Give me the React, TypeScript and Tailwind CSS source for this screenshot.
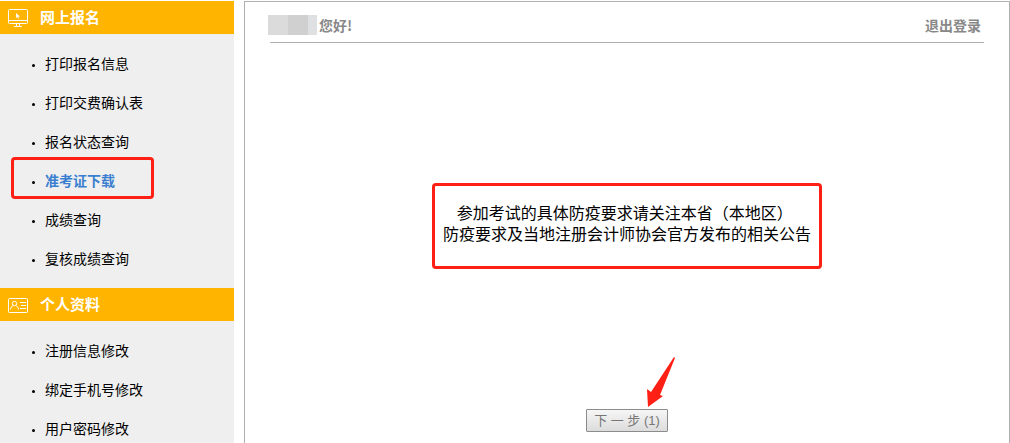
const MENU = [
  {
    title: "网上报名",
    icon: "monitor",
    items: [
      { label: "打印报名信息" },
      { label: "打印交费确认表" },
      { label: "报名状态查询" },
      { label: "准考证下载", active: true },
      { label: "成绩查询" },
      { label: "复核成绩查询" },
    ],
  },
  {
    title: "个人资料",
    icon: "card",
    items: [
      { label: "注册信息修改" },
      { label: "绑定手机号修改" },
      { label: "用户密码修改" },
    ],
  },
];

function MonitorIcon() {
  return (
    <svg className="h-5 w-5" viewBox="0 0 20 20" fill="none" stroke="#fff">
      <rect x="0.5" y="1.5" width="19" height="14" rx="1" />
      <path d="M1 12.5h18M8.5 16v2M11.5 16v2M6 18.5h8" />
      <path d="M8 5l4 3.5-1.8.2.8 2-.8.3-.8-2L8 10z" fill="#fff" stroke="none" />
    </svg>
  );
}

function CardIcon() {
  return (
    <svg className="h-5 w-5" viewBox="0 0 20 20" fill="none" stroke="#fff">
      <rect x="0.5" y="3.5" width="19" height="14" rx="1" />
      <circle cx="6.5" cy="8.5" r="2.2" />
      <path d="M2.5 14.5c.3-2.2 1.3-3.4 2.7-4M7.8 10.5c1.4.6 2.4 1.8 2.7 4M12 7.5h6M13 10.5h5M12 13.5h6" />
    </svg>
  );
}

function Sidebar() {
  return (
    <nav className="w-[234px] shrink-0 bg-[#efefef]">
      {MENU.map((group) => (
        <section key={group.title}>
          <h2 className="flex h-[33px] items-center gap-3 bg-[#ffb400] px-2 text-[15px] font-bold text-white">
            {group.icon === "monitor" ? <MonitorIcon /> : <CardIcon />}
            {group.title}
          </h2>
          <ul className="pt-[9px] pb-[11px]">
            {group.items.map((item) => (
              <li key={item.label} className="relative flex h-[39px] items-center gap-2.5 pl-8">
                <span className="mt-1.5 h-[3px] w-[3px] rounded-full bg-black" />
                <a
                  href="#"
                  className={item.active ? "text-sm font-bold text-[#3b7fd0]" : "text-sm text-black"}
                >
                  {item.label}
                </a>
                {item.active && (
                  <span className="pointer-events-none absolute -top-[3px] left-[11px] h-[42px] w-[143px] rounded-sm border-3 border-[#ff2015]" />
                )}
              </li>
            ))}
          </ul>
        </section>
      ))}
    </nav>
  );
}

export default function App() {
  return (
    <div className="flex min-h-screen gap-2.5 bg-white pt-px font-['Noto_Sans_CJK_SC',sans-serif]">
      <Sidebar />

      <main className="flex-1 border border-[#b0b0b0] px-[25px] pt-1.5">
        <header className="flex h-[35px] items-center justify-between border-b border-[#b0b0b0] pr-[3px] text-sm font-bold text-[#888]">
          <div className="-ml-0.5 flex items-center gap-0.5">
            {/* masked user name */}
            <span className="flex h-5">
              <span className="w-5 bg-[#dbdbdb]" />
              <span className="w-5 bg-[#d0d0d0]" />
              <span className="w-[9px] bg-[#dfe0e2]" />
            </span>
            <span>您好!</span>
          </div>
          <a href="#">退出登录</a>
        </header>

        <div className="flex flex-col items-center pt-[140px]">
          <p className="w-[390px] rounded-sm border-3 border-[#ff2015] pt-[17px] pb-[21px] text-center font-['Liberation_Sans','Noto_Sans_CJK_SC',sans-serif] text-base leading-[21px] text-black">
            参加考试的具体防疫要求请关注本省（本地区）&nbsp;
            <br />
            防疫要求及当地注册会计师协会官方发布的相关公告
          </p>

          <div className="relative mt-[140px]">
            <button
              type="button"
              className="block h-[23px] w-[82px] rounded-[1px] border border-[#8c8c8c] bg-linear-to-b from-[#f6f6f6] to-[#dcdcdc] font-['Liberation_Sans','Noto_Sans_CJK_SC',sans-serif] text-[13px] text-[#777]"
            >
              下 一 步 (1)
            </button>
            {/* pointer to the next step */}
            <svg
              className="pointer-events-none absolute bottom-6 left-[60px] h-[54px] w-[30px]"
              viewBox="0 0 30 54"
              fill="#ff2015"
            >
              <path d="M28 3L29 4L14 41L17 42L2 53L1 35L5 38Z" />
            </svg>
          </div>
        </div>
      </main>
    </div>
  );
}
